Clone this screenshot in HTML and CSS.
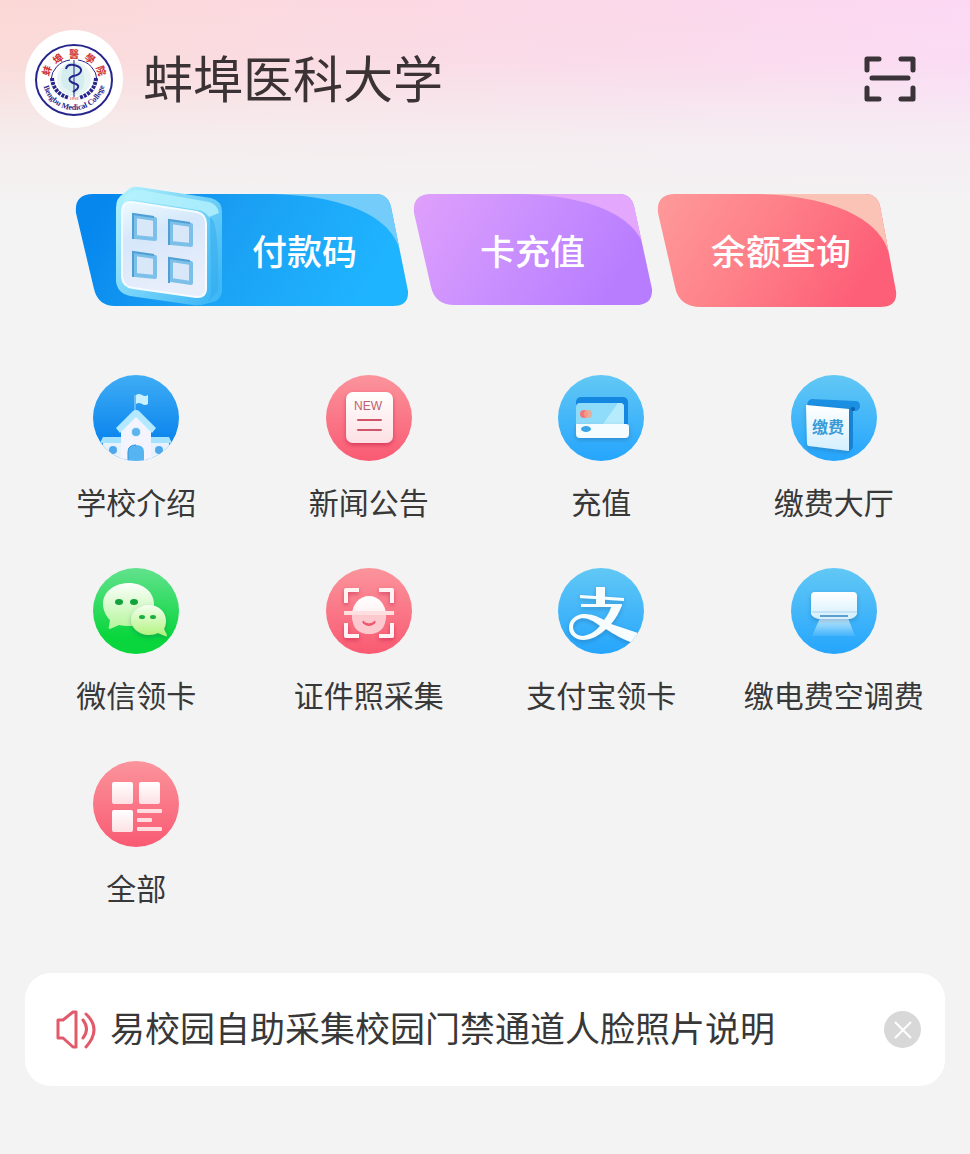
FILE: index.html
```html
<!DOCTYPE html>
<html lang="zh-CN">
<head>
    <meta charset="UTF-8">
    <meta name="viewport" content="width=device-width, initial-scale=1.0">
    <title>蚌埠医科大学</title>
    <link rel="stylesheet" href="styles.css">
</head>
<body>
    <!-- shared gradients -->
    <svg class="defs" width="0" height="0" aria-hidden="true">
        <defs>
            <linearGradient id="blue" x1="0" y1="0" x2="0" y2="1">
                <stop offset="0" stop-color="#62c8f5"/>
                <stop offset="1" stop-color="#25a5fd"/>
            </linearGradient>
            <linearGradient id="deepBlue" x1="0" y1="0" x2="0" y2="1">
                <stop offset="0" stop-color="#3fadf5"/>
                <stop offset="0.7" stop-color="#0f88ee"/>
            </linearGradient>
            <linearGradient id="pink" x1="0" y1="0" x2="0" y2="1">
                <stop offset="0" stop-color="#fb949c"/>
                <stop offset="1" stop-color="#f95a72"/>
            </linearGradient>
            <linearGradient id="green" x1="0" y1="0" x2="0" y2="1">
                <stop offset="0" stop-color="#62e28d"/>
                <stop offset="0.8" stop-color="#08d63c"/>
            </linearGradient>
            <linearGradient id="paper" x1="0" y1="0" x2="0" y2="1">
                <stop offset="0" stop-color="#ffffff"/>
                <stop offset="1" stop-color="#fde0e4"/>
            </linearGradient>
            <linearGradient id="ice" x1="0" y1="0" x2="0" y2="1">
                <stop offset="0" stop-color="#ffffff"/>
                <stop offset="1" stop-color="#d3effd"/>
            </linearGradient>
            <filter id="shadow" x="-20%" y="-20%" width="140%" height="150%">
                <feDropShadow dx="0" dy="2" stdDeviation="2" flood-color="#123c6e" flood-opacity="0.3"/>
            </filter>
            <filter id="redShadow" x="-20%" y="-20%" width="140%" height="150%">
                <feDropShadow dx="0" dy="2" stdDeviation="2" flood-color="#b01030" flood-opacity="0.45"/>
            </filter>
            <clipPath id="round"><circle cx="43" cy="43" r="43"/></clipPath>
        </defs>
    </svg>

    <header class="header">
        <svg class="logo" viewBox="0 0 98 98" role="img" aria-label="校徽">
            <defs>
                <path id="sealArc" d="M18 50 A31 30 0 0 0 80 50"/>
            </defs>
            <circle cx="49" cy="49" r="49" fill="#fff"/>
            <ellipse cx="49" cy="50" rx="38" ry="35" fill="#fff" stroke="#27268c" stroke-width="2"/>
            <circle cx="49" cy="49" r="17" fill="#e6f5f4"/>
            <path d="M41 34q8-4 15 2 6 10 2 22l-8 6-12-7q-5-12 3-23" fill="#d6edf0"/>
            <g fill="none" stroke="#27268c">
                <path d="M45 30A22 21 0 0 0 26 50M53 30A22 21 0 0 1 72 50" stroke-width="1"/>
                <path d="M27 48q1 15 17 20M71 48q-1 15-17 20" stroke-width="4" stroke-dasharray="3 1"/>
                <path d="M49 30v37" stroke-width="1"/>
                <path d="M41 39q1-5 8-4 8 2 7 6-1 4-8 5-5 2-3 5 2 2 6 3 4 2 1 5l-4 3" stroke-width="2"/>
            </g>
            <g class="seal-cn">
                <text x="49" y="28">醫</text>
                <text x="49" y="27" transform="rotate(-37 49 50)">埠</text>
                <text x="49" y="25" transform="rotate(-71 49 50)">蚌</text>
                <text x="49" y="27" transform="rotate(37 49 50)">學</text>
                <text x="49" y="25" transform="rotate(71 49 50)">院</text>
            </g>
            <text class="seal-year" x="49" y="70">1958</text>
            <text class="seal-en"><textPath href="#sealArc" startOffset="50%">Bengbu Medical College</textPath></text>
        </svg>
        <h1>蚌埠医科大学</h1>
        <button class="scan" type="button" aria-label="扫一扫">
            <svg viewBox="0 0 52 46" width="52" height="46">
                <path d="M15 3H3v11M37 3h12v11M3 32v11h12M49 32v11H37M8 22h36" fill="none" stroke="#3a3338" stroke-width="5" stroke-linecap="round" stroke-linejoin="round"/>
            </svg>
        </button>
    </header>

    <main>
        <div class="banners">
            <button class="banner banner-pay" type="button">
                <svg viewBox="0 0 333 114" preserveAspectRatio="none" aria-hidden="true">
                    <defs>
                        <linearGradient id="payBg" x1="0" y1="0" x2="1" y2="0.2">
                            <stop offset="0.1" stop-color="#0587ee"/>
                            <stop offset="0.5" stop-color="#1a9ff3"/>
                            <stop offset="1" stop-color="#1fb4ff"/>
                        </linearGradient>
                        <linearGradient id="tile" x1="0" y1="0" x2="1" y2="0.8">
                            <stop offset="0" stop-color="#b4f4fd"/>
                            <stop offset="0.4" stop-color="#86dbf9"/>
                            <stop offset="1" stop-color="#3fb8f6"/>
                        </linearGradient>
                        <linearGradient id="tileFace" x1="0" y1="0" x2="0.3" y2="1">
                            <stop offset="0" stop-color="#ecfaff"/>
                            <stop offset="0.4" stop-color="#d5e7fa"/>
                            <stop offset="1" stop-color="#e9eefb"/>
                        </linearGradient>
                        <clipPath id="payShape">
                            <path d="M18 1H300Q313 1 316 14L333 98Q334 113 318 113H40Q23 113 19 96L1 20Q-1 1 18 1Z"/>
                        </clipPath>
                    </defs>
                    <g clip-path="url(#payShape)">
                        <rect width="334" height="114" fill="url(#payBg)"/>
                        <path d="M190 1C260 1 316 20 325 58L340 0Z" fill="#74ccfb"/>
                    </g>
                    <path d="M54-4Q57-7 64-6L136 5Q147 8 147 18V98Q146 107 138 109L130 111Q126 113 118 112L55 103Q42 100 41 88V15Q41 5 48 1Z" fill="url(#tile)"/>
                    <path d="M50 3Q56-4 66-3L134 9Q143 12 144 20L134 24Q130 18 122 17L60 7Q52 6 47 12Z" fill="#b6f3fd" opacity="0.8"/>
                    <path d="M135 25Q144 24 143 98L133 109Q137 102 136 96Z" fill="#2fa9ee" opacity="0.5"/>
                    <path d="M57 9L122 19Q131 21 131 31V95Q131 105 121 104L58 95Q48 94 47 84V18Q48 8 57 9Z" fill="url(#tileFace)" stroke="#f5fcff" stroke-width="2"/>
                    <g fill="#d9e8f9" stroke="#7cc0ea" stroke-width="4" stroke-linejoin="round">
                        <path d="M60 23L80 26V46L60 44Z"/>
                        <path d="M96 29L116 32V52L96 50Z"/>
                        <path d="M60 61L80 64V84L60 82Z"/>
                        <path d="M96 67L116 70V90L96 87Z"/>
                    </g>
                    <g fill="none" stroke="#4f9fd4" stroke-width="2">
                        <path d="M58 46V21L79 24M94 52V27L115 30M58 84V59L79 62M94 90V65L115 68"/>
                    </g>
                </svg>
                <span>付款码</span>
            </button>
            <button class="banner banner-card" type="button">
                <svg viewBox="0 0 239 114" preserveAspectRatio="none" aria-hidden="true">
                    <defs>
                        <linearGradient id="cardBg" x1="0" y1="0" x2="1" y2="0.3">
                            <stop offset="0" stop-color="#e0a0fb"/>
                            <stop offset="0.5" stop-color="#ca90fe"/>
                            <stop offset="1" stop-color="#b87dff"/>
                        </linearGradient>
                        <clipPath id="cardShape">
                            <path d="M18 1H206Q218 1 221 13L239 96Q240 112 222 112H42Q22 112 18 94L1 20Q-1 1 18 1Z"/>
                        </clipPath>
                    </defs>
                    <g clip-path="url(#cardShape)">
                        <rect width="240" height="114" fill="url(#cardBg)"/>
                        <path d="M100 1C170 1 222 20 232 56L245 0Z" fill="#e3a8fe"/>
                    </g>
                </svg>
                <span>卡充值</span>
            </button>
            <button class="banner banner-balance" type="button">
                <svg viewBox="0 0 240 114" preserveAspectRatio="none" aria-hidden="true">
                    <defs>
                        <linearGradient id="balanceBg" x1="0" y1="0" x2="1" y2="0.3">
                            <stop offset="0" stop-color="#fe9a9a"/>
                            <stop offset="0.5" stop-color="#fe8088"/>
                            <stop offset="1" stop-color="#fd5f78"/>
                        </linearGradient>
                        <clipPath id="balanceShape">
                            <path d="M18 1H208Q220 1 223 13L239 98Q241 114 223 114H44Q22 114 18 94L1 20Q-1 1 18 1Z"/>
                        </clipPath>
                    </defs>
                    <g clip-path="url(#balanceShape)">
                        <rect width="241" height="114" fill="url(#balanceBg)"/>
                        <path d="M95 1C165 1 222 22 232 60L245 0Z" fill="#fbc2b6"/>
                    </g>
                </svg>
                <span>余额查询</span>
            </button>
        </div>

        <nav class="services">
            <a class="service" href="#">
                <svg viewBox="0 0 86 86" aria-hidden="true">
                    <g clip-path="url(#round)">
                        <rect width="86" height="86" fill="url(#deepBlue)"/>
                        <path d="M42 20v17" stroke="#9edcff" stroke-width="1"/>
                        <path d="M43 20q3-2 6 0t6 0v9q-3 2-6 0t-6 0z" fill="#c9f0ff"/>
                        <path d="M10 66h20v20H10zM56 66h20v20H56z" fill="#e7f2fd"/>
                        <path d="M10 62h20v6H7zM56 62h20l3 6H56z" fill="#a5e2ff"/>
                        <path d="M28 52L43 38l15 14v34H28z" fill="#f3f4fd"/>
                        <path d="M43 35q2 0 3 1l17 17-4 5-16-16-16 16-4-5 17-17q1-1 3-1z" fill="#b3e9ff"/>
                        <circle cx="43" cy="57" r="5" fill="#d3ecfd"/>
                        <circle cx="43" cy="57" r="4" fill="#5db4ee"/>
                        <path d="M35 86V77q0-7 8-7t8 7v9z" fill="#56b5f1"/>
                        <path d="M35 86V77q0-7 8-7" fill="none" stroke="#2e91da" stroke-width="1"/>
                        <circle cx="20" cy="75" r="4" fill="#4fa8ec"/>
                        <circle cx="66" cy="75" r="4" fill="#4fa8ec"/>
                        <path d="M15 81h10v2H15zM61 81h10v2H61z" fill="#b4dffa"/>
                    </g>
                </svg>
                <span>学校介绍</span>
            </a>
            <a class="service" href="#">
                <svg viewBox="0 0 86 86" aria-hidden="true">
                    <circle cx="43" cy="43" r="43" fill="url(#pink)"/>
                    <rect x="20" y="17" width="47" height="51" rx="7" fill="url(#paper)" filter="url(#redShadow)"/>
                    <text class="icon-new" x="42" y="35">NEW</text>
                    <path d="M32 45h23M32 55h23" stroke="#d15468" stroke-width="2" stroke-linecap="round"/>
                </svg>
                <span>新闻公告</span>
            </a>
            <a class="service" href="#">
                <svg viewBox="0 0 86 86" aria-hidden="true">
                    <circle cx="43" cy="43" r="43" fill="url(#blue)"/>
                    <rect x="18" y="22" width="52" height="36" rx="5" fill="#1488e0"/>
                    <rect x="18" y="28" width="48" height="28" rx="4" fill="#8fdcfa"/>
                    <path d="M40 56L60 28h2q4 0 4 4v24z" fill="#b5ebfd"/>
                    <circle cx="26" cy="39" r="4" fill="#f2757c"/>
                    <circle cx="30" cy="39" r="4" fill="#f9a184" opacity="0.8"/>
                    <path d="M18 49h50q3 0 3 3v7q0 4-4 4H22q-4 0-4-4z" fill="#f5fcff" filter="url(#shadow)"/>
                    <ellipse cx="28" cy="54" rx="5" ry="3" fill="#3ba5e6"/>
                </svg>
                <span>充值</span>
            </a>
            <a class="service" href="#">
                <svg viewBox="0 0 86 86" aria-hidden="true">
                    <circle cx="43" cy="43" r="43" fill="url(#blue)"/>
                    <path d="M20 24L64 26q5 0 5 5t-6 5L18 32q-4-5 2-8z" fill="#1b8fe2"/>
                    <path d="M57 34l5-3v42l-5 4z" fill="#1787d8"/>
                    <path d="M15 30l43 4v42l-40-5q-2 0-2-3z" fill="url(#ice)" filter="url(#shadow)"/>
                    <circle cx="62" cy="34" r="2" fill="#0c5fae"/>
                    <text class="icon-pay" x="37" y="58">缴费</text>
                </svg>
                <span>缴费大厅</span>
            </a>
            <a class="service" href="#">
                <svg viewBox="0 0 86 86" aria-hidden="true">
                    <defs>
                        <linearGradient id="bubble" x1="0" y1="0" x2="0" y2="1">
                            <stop offset="0" stop-color="#fbfffb"/>
                            <stop offset="1" stop-color="#b4f59a"/>
                        </linearGradient>
                        <linearGradient id="bubbleSmall" x1="0" y1="0" x2="0" y2="1">
                            <stop offset="0" stop-color="#f4fff0"/>
                            <stop offset="1" stop-color="#b0f27c"/>
                        </linearGradient>
                    </defs>
                    <circle cx="43" cy="43" r="43" fill="url(#green)"/>
                    <path d="M36 15c14 0 25 9 25 21S50 58 36 58q-6 0-10-1l-9 4q-2 0-1-3l1-6C13 48 10 42 10 36c0-12 11-21 26-21z" fill="url(#bubble)"/>
                    <path d="M56 37c10 0 17 7 17 16 0 3-1 6-2 8l3 6q0 2-2 1l-7-3q-4 2-9 2c-10 0-18-7-18-15s8-15 18-15z" fill="url(#bubbleSmall)" filter="url(#shadow)"/>
                    <ellipse cx="26" cy="34" rx="4" ry="3" fill="#10a33c"/>
                    <ellipse cx="41" cy="34" rx="4" ry="3" fill="#10a33c"/>
                    <ellipse cx="49" cy="49" rx="3" ry="2" fill="#1cae3f"/>
                    <ellipse cx="60" cy="49" rx="3" ry="2" fill="#1cae3f"/>
                </svg>
                <span>微信领卡</span>
            </a>
            <a class="service" href="#">
                <svg viewBox="0 0 86 86" aria-hidden="true">
                    <circle cx="43" cy="43" r="43" fill="url(#pink)"/>
                    <g filter="url(#redShadow)">
                        <path d="M33 22H20v13M53 22h13v13M20 55v13h13M66 55v13H53" fill="none" stroke="#fff3f3" stroke-width="4" stroke-linejoin="round"/>
                    </g>
                    <ellipse cx="43" cy="47" rx="17" ry="19" fill="url(#paper)"/>
                    <path d="M26 47h34q0 19-17 19T26 47z" fill="#fcc9cf"/>
                    <path d="M37 53q6 6 12 0v2q-6 5-12 0z" fill="#f0566c" stroke="#f0566c" stroke-width="1"/>
                    <path d="M18 45h50" stroke="#ffdfdf" stroke-width="4"/>
                </svg>
                <span>证件照采集</span>
            </a>
            <a class="service" href="#">
                <svg viewBox="0 0 86 86" aria-hidden="true">
                    <g clip-path="url(#round)">
                        <rect width="86" height="86" fill="url(#blue)"/>
                        <g filter="url(#shadow)">
                            <path d="M38 19h9v19h-9zM22 27l44 3v3l-44-3zM23 36h41l-1 3H23z" fill="#f7fdff"/>
                            <path d="M54 37h10q-4 11-11 19l27 9-5 10q-14-5-27-14-10 10-22 11c-9 0-15-6-15-12 0-8 6-13 14-14 8 0 14 2 21 6q5-6 8-15zM42 58c-6-5-12-8-18-8-5 1-9 4-9 9s4 9 10 9c6-1 12-4 17-10z" fill="#f7fdff" fill-rule="evenodd"/>
                        </g>
                    </g>
                </svg>
                <span>支付宝领卡</span>
            </a>
            <a class="service" href="#">
                <svg viewBox="0 0 86 86" aria-hidden="true">
                    <defs>
                        <linearGradient id="air" x1="0" y1="0" x2="0" y2="1">
                            <stop offset="0" stop-color="#e4f8ff" stop-opacity="0.9"/>
                            <stop offset="1" stop-color="#aee2ff" stop-opacity="0.15"/>
                        </linearGradient>
                    </defs>
                    <circle cx="43" cy="43" r="43" fill="url(#blue)"/>
                    <path d="M29 50h28l7 18H21z" fill="url(#air)"/>
                    <path d="M24 24h38q4 0 4 4v18q-2 4-7 5H28q-6-1-8-5V28q0-4 4-4z" fill="url(#ice)" filter="url(#shadow)"/>
                    <path d="M21 44h45" stroke="#a6d4ee" stroke-width="1"/>
                    <path d="M29 48h28" stroke="#5b9fcd" stroke-width="2"/>
                </svg>
                <span>缴电费空调费</span>
            </a>
            <a class="service" href="#">
                <svg viewBox="0 0 86 86" aria-hidden="true">
                    <circle cx="43" cy="43" r="43" fill="url(#pink)"/>
                    <g fill="url(#paper)">
                        <rect x="19" y="21" width="21" height="22" rx="2"/>
                        <rect x="46" y="21" width="21" height="22" rx="2"/>
                        <rect x="19" y="49" width="21" height="22" rx="2"/>
                    </g>
                    <g fill="#ffdde0">
                        <rect x="44" y="48" width="25" height="4" rx="1"/>
                        <rect x="44" y="57" width="15" height="4" rx="1"/>
                        <rect x="44" y="66" width="25" height="4" rx="1"/>
                    </g>
                </svg>
                <span>全部</span>
            </a>
        </nav>

        <section class="notice">
            <svg class="notice-icon" viewBox="0 0 40 40" aria-hidden="true">
                <path d="M2 10h5L17 2h3v35h-3L7 28H2zM27 10q7 9 0 18M30 4q16 15 0 33" fill="none" stroke="#e2596a" stroke-width="3" stroke-linecap="round" stroke-linejoin="round"/>
            </svg>
            <p>易校园自助采集校园门禁通道人脸照片说明</p>
            <button class="close" type="button" aria-label="关闭">
                <svg viewBox="0 0 18 18" width="18" height="18">
                    <path d="M1 1l16 16M17 1L1 17" stroke="#fff" stroke-width="2"/>
                </svg>
            </button>
        </section>
    </main>
</body>
</html>
```

FILE: styles.css
```css
* {
    box-sizing: border-box;
}

body {
    font-family: "Noto Sans CJK SC", sans-serif;
    margin: 0;
    padding: 0;
    color: #383838;
    background-color: #f3f3f3;
    background-image:
        linear-gradient(to bottom, rgba(243, 243, 243, 0) 0, rgba(243, 243, 243, 0.12) 60px, rgba(243, 243, 243, 0.75) 135px, #f3f3f3 210px),
        linear-gradient(to right, #fbd8d6 0%, #fbd9e0 30%, #fbd8e8 60%, #fcd8f4 100%);
    background-repeat: no-repeat;
    background-size: 100% 210px;
}

button {
    font-family: inherit;
    border: 0;
    padding: 0;
    background: none;
    cursor: pointer;
}

svg {
    display: block;
}

.defs {
    position: absolute;
}

/* header */
.header {
    display: flex;
    align-items: center;
    gap: 20px;
    padding: 30px 54px 0 25px;
}

.logo {
    width: 98px;
    height: 98px;
}

.seal-cn {
    font-size: 10px;
    font-weight: bold;
    fill: #cf2f35;
    text-anchor: middle;
}

.seal-year {
    font-size: 4px;
    fill: #cf2f35;
    text-anchor: middle;
}

.seal-en {
    font-family: "Liberation Serif", serif;
    font-size: 8px;
    font-weight: bold;
    fill: #27268c;
    text-anchor: middle;
}

.header h1 {
    flex: 1;
    margin: 0;
    padding-bottom: 6px;
    font-size: 50px;
    font-weight: normal;
    line-height: 60px;
    color: #3a3235;
}

/* banners */
.banners {
    display: grid;
    grid-template-columns: 333fr 239fr 240fr;
    gap: 5px;
    margin: 65px 73px 0 75px;
}

.banner {
    position: relative;
    height: 114px;
    font-size: 35px;
    font-weight: 500;
    line-height: 50px;
    color: #fff;
}

.banner svg {
    position: absolute;
    top: 0;
    left: 0;
    width: 100%;
    height: 100%;
    overflow: visible;
}

.banner span {
    position: relative;
}

.banner-pay {
    padding-left: 126px;
}

.banner-balance {
    padding-left: 8px;
}

/* services */
.services {
    display: grid;
    grid-template-columns: repeat(4, 1fr);
    row-gap: 46px;
    padding: 0 20px;
    margin-top: 68px;
}

.service {
    display: flex;
    flex-direction: column;
    align-items: center;
    gap: 19px;
    font-size: 30px;
    line-height: 42px;
    white-space: nowrap;
    color: #383838;
    text-decoration: none;
}

.service svg {
    width: 86px;
    height: 86px;
}

.icon-new {
    font-family: "Liberation Sans", sans-serif;
    font-size: 12px;
    fill: #c0606f;
    text-anchor: middle;
}

.icon-pay {
    font-size: 16px;
    font-weight: bold;
    fill: #3a9ad6;
    text-anchor: middle;
}

/* notice */
.notice {
    display: flex;
    align-items: center;
    gap: 14px;
    margin: 65px 25px 68px;
    padding: 30px 24px 30px 31px;
    background-color: #fff;
    border-radius: 26px;
}

.notice-icon {
    width: 40px;
    height: 40px;
}

.notice p {
    flex: 1;
    margin: 0;
    padding-bottom: 5px;
    font-size: 35px;
    line-height: 48px;
}

.close {
    display: flex;
    align-items: center;
    justify-content: center;
    width: 37px;
    height: 37px;
    border-radius: 50%;
    background-color: #d8d8d8;
}
```
